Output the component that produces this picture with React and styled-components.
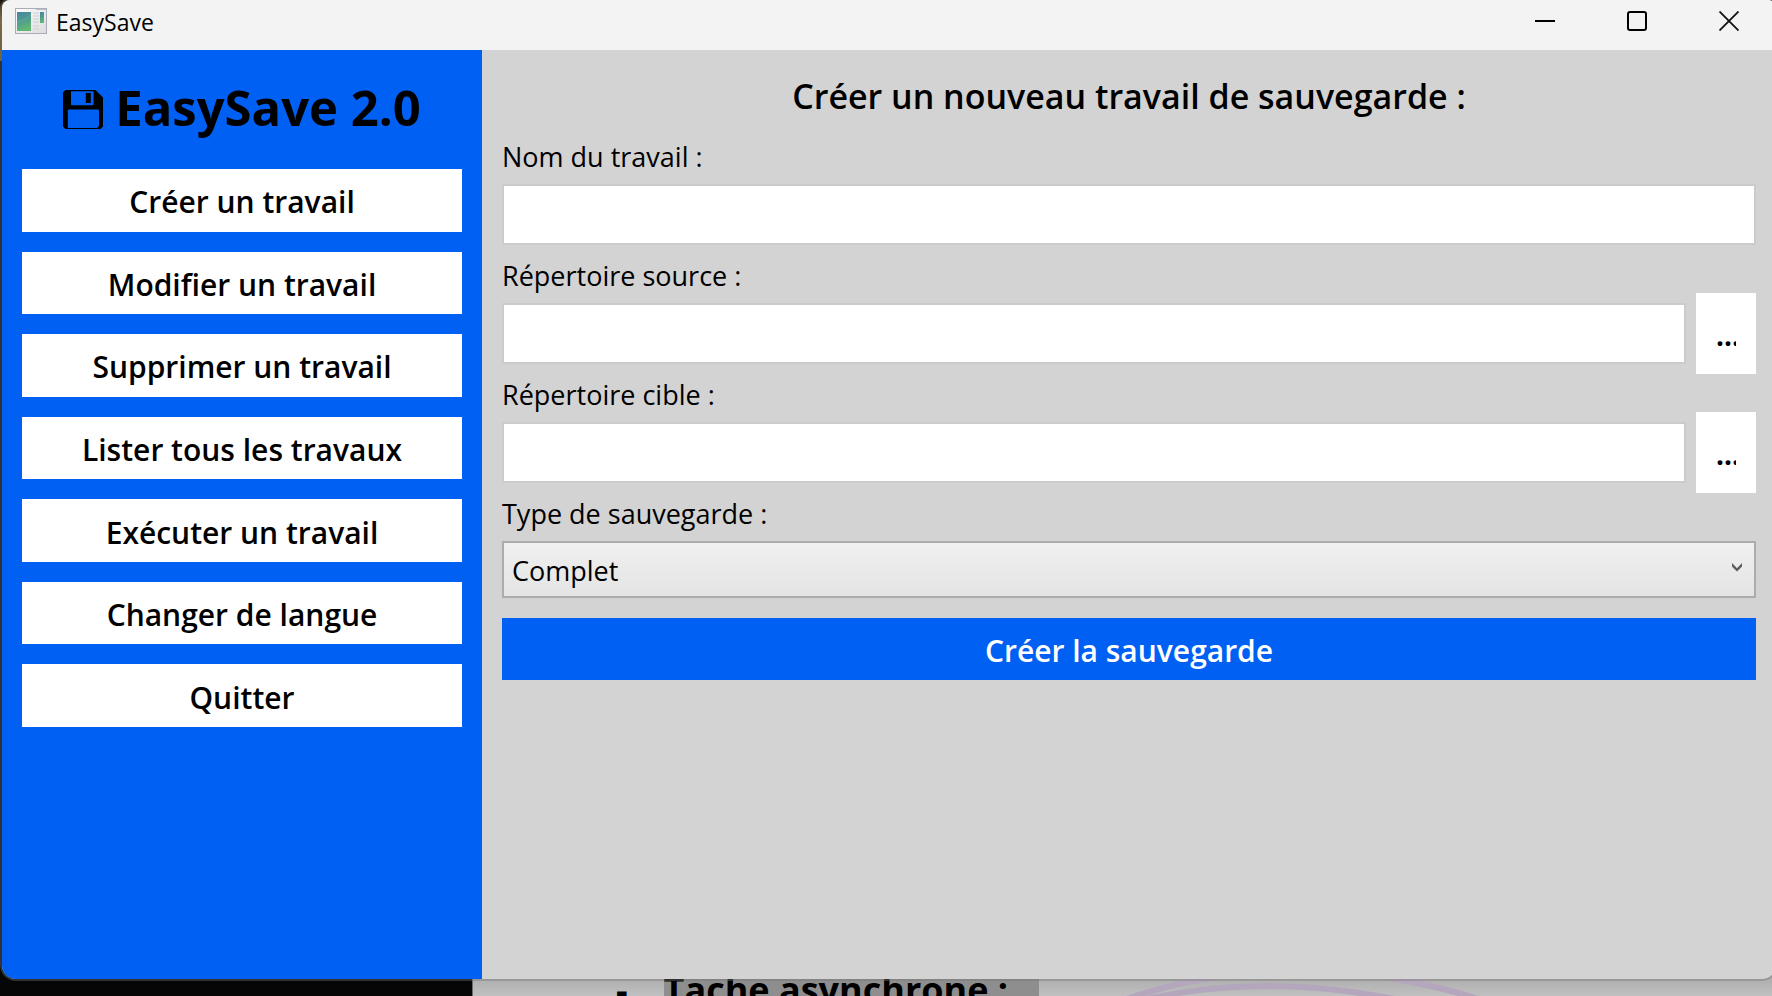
import React, { useId, useState } from 'react';
import styled, { createGlobalStyle } from 'styled-components';

const BLUE = '#0060f3';

const GlobalStyle = createGlobalStyle`
  *, *::before, *::after { box-sizing: border-box; }
  body {
    margin: 0;
    overflow: hidden;
    background: #060606;
    color: #000;
    font-family: "Segoe UI", "Open Sans", "Noto Sans", sans-serif;
  }
  button, input, select { font: inherit; color: inherit; border-radius: 0; }
`;

const Desktop = styled.div`
  position: relative;
  display: flex;
  min-height: 100vh;
  overflow: hidden;
`;

/* What shows behind the window: a wallpaper edge and an open document. */
const Wallpaper = styled.div`
  position: absolute;
  top: 0;
  left: 0;
  width: 12px;
  height: 61px;
  background: linear-gradient(#16120a, #7d6420 20px, #6a5518);
`;

const DocumentBehind = styled.div`
  position: absolute;
  inset: 50% 0 0 472px;
  overflow: hidden;
  border-left: 1px solid #6c6c6c;
  background: linear-gradient(to top, #c0c0c0, #b0b0b0 16px);
`;

const DocumentLine = styled.p`
  position: absolute;
  left: 143px;
  bottom: -18px;
  display: flex;
  gap: 36px;
  margin: 0;
  font-size: 36px;
  font-weight: 700;
  line-height: 48px;
`;

const Highlight = styled.mark`
  width: 375px;
  color: inherit;
  background: #8e8e8e;
`;

const Doodle = styled.svg`
  position: absolute;
  left: 627px;
  bottom: 0;
`;

const Window = styled.div`
  position: relative;
  flex: 1;
  display: flex;
  flex-direction: column;
  margin: -2px -6px 15px 0;
  border: 2px solid rgba(118, 118, 118, 0.4);
  border-radius: 10px 10px 16px 16px;
  background: #d3d3d3;
  background-clip: padding-box;
  overflow: hidden;
`;

const TitleBar = styled.header`
  display: flex;
  align-items: center;
  height: 50px;
  padding: 0 1px 8px 13px;
  background: #f3f3f3;
`;

const WindowTitle = styled.span`
  flex: 1;
  padding: 2px 0 0 9px;
  font-size: 23px;
  line-height: 40px;
`;

const WindowButton = styled.button`
  display: grid;
  place-items: center;
  width: 92px;
  height: 42px;
  padding: 0;
  border: 0;
  background: none;
`;

const Body = styled.div`
  flex: 1;
  display: flex;
`;

const Sidebar = styled.aside`
  flex: 0 0 480px;
  padding: 20px;
  background: ${BLUE};
`;

const Brand = styled.h1`
  display: flex;
  align-items: center;
  justify-content: center;
  gap: 12px;
  margin: 0 0 25px;
  font-size: 49px;
  font-weight: 700;
  line-height: 74px;
`;

const BrandIcon = styled.svg`
  margin-top: 4px;
`;

const Nav = styled.nav`
  display: grid;
  grid-auto-rows: 1fr;
  gap: 20px;
  min-height: 558px;
`;

const ActionButton = styled.button`
  width: 100%;
  min-height: 62px;
  padding: 4px 20px 0;
  border: 0;
  font-size: 30px;
  font-weight: 600;
  line-height: 40px;
  color: ${(p) => (p.$primary ? '#fff' : '#000')};
  background: ${(p) => (p.$primary ? BLUE : '#fff')};
`;

const Main = styled.main`
  flex: 1;
  min-width: 0;
  padding: 20px;
`;

const FormTitle = styled.h2`
  margin: 0 0 14px;
  font-size: 34px;
  font-weight: 600;
  line-height: 52px;
  text-align: center;
`;

const Label = styled.label`
  display: block;
  padding-top: 3px;
  font-size: 27px;
  line-height: 35px;
`;

const FieldRow = styled.div`
  display: flex;
  align-items: center;
  gap: 10px;
  min-height: 81px;
`;

const TextInput = styled.input`
  flex: 1;
  min-width: 0;
  height: 61px;
  padding: 0 8px;
  border: 2px solid #cbcbcb;
  background: #fff;
  font-size: 27px;
`;

const BrowseButton = styled.button`
  flex: none;
  width: 60px;
  height: 81px;
  padding: 2px 20px 0;
  border: 0;
  background: #fff;
  font-size: 28px;
  font-weight: 700;
  line-height: 40px;
`;

const Clipped = styled.span`
  display: block;
  overflow: hidden;
  text-align: left;
  white-space: nowrap;
`;

const SelectBox = styled.div`
  position: relative;
  margin: 10px 0 20px;
`;

const Select = styled.select`
  display: block;
  appearance: none;
  width: 100%;
  height: 57px;
  padding: 2px 50px 0 8px;
  border: 2px solid #acacac;
  background: linear-gradient(#f0f0f0, #e4e4e4);
  font-size: 27px;
`;

const Chevron = styled.svg`
  position: absolute;
  top: 22px;
  right: 14px;
  pointer-events: none;
`;

function AppIcon() {
  return (
    <svg width="32" height="26" viewBox="0 0 32 26" aria-hidden="true">
      <defs>
        <linearGradient id="pane" x1="0" y1="0" x2="0.3" y2="1">
          <stop offset="0" stopColor="#4b83a6" />
          <stop offset="0.5" stopColor="#4d9a8e" />
          <stop offset="1" stopColor="#63b873" />
        </linearGradient>
        <linearGradient id="frame" x1="0" y1="0" x2="1" y2="1">
          <stop offset="0" stopColor="#fdfdfd" />
          <stop offset="1" stopColor="#dcdcdf" />
        </linearGradient>
      </defs>
      <rect x="0.5" y="0.5" width="31" height="25" fill="url(#frame)" stroke="#a9adb8" />
      <path d="M21 1.5h10" stroke="#b9bdc8" />
      <rect x="2" y="4" width="14" height="19" fill="url(#pane)" />
      <path d="M2 14c5-1 9-3 14-7" fill="none" stroke="#7fb6b4" strokeOpacity="0.5" />
      <path d="M18 5h6M18 8h6M18 11h6M18 14h6M18 18h6M18 21h6" stroke="#cfcfd2" />
      <rect x="25" y="4" width="4" height="11" fill="url(#pane)" />
    </svg>
  );
}

function FloppyIcon() {
  return (
    <BrandIcon width="40" height="39" viewBox="0 0 40 39" aria-hidden="true">
      <path
        fillRule="evenodd"
        d="M2.5 0H32.5L40 7.5V36.5L37.5 39H2.5L0 36.5V2.5ZM8 1.2V14.2Q8 15.2 9 15.2H29.5Q30.6 15.2 30.6 14.2V2.2Q30.6 1.2 29.5 1.2ZM22.8 3H27.8V13H22.8ZM6 19.4Q4.8 19.4 4.8 20.4V38H34L36 36V20.4Q36 19.4 34.8 19.4Z"
      />
    </BrandIcon>
  );
}

const NAV_ITEMS = [
  'Créer un travail',
  'Modifier un travail',
  'Supprimer un travail',
  'Lister tous les travaux',
  'Exécuter un travail',
  'Changer de langue',
  'Quitter',
];

function TextField({ label, browse }) {
  const id = useId();
  return (
    <>
      <Label htmlFor={id}>{label}</Label>
      <FieldRow>
        <TextInput id={id} type="text" />
        {browse && (
          <BrowseButton type="button" aria-label={`Parcourir, ${label}`}>
            <Clipped>...</Clipped>
          </BrowseButton>
        )}
      </FieldRow>
    </>
  );
}

export default function App() {
  const [type, setType] = useState('Complet');
  return (
    <>
      <GlobalStyle />
      <Desktop>
        <Wallpaper />
        <DocumentBehind>
          <DocumentLine>
            <span>-</span>
            <Highlight>Tache asynchrone :</Highlight>
          </DocumentLine>
          <Doodle width="420" height="20" viewBox="0 0 420 20" aria-hidden="true">
            <g fill="none" stroke="#b4a6bc" strokeWidth="6">
              <path d="M24 24Q70 8 110 2Q200 -20 290 2Q335 9 385 25" />
              <path d="M46 23Q165 -3 295 23" />
            </g>
          </Doodle>
        </DocumentBehind>
        <Window>
          <TitleBar>
            <AppIcon />
            <WindowTitle>EasySave</WindowTitle>
            <WindowButton type="button" aria-label="Réduire">
              <svg width="20" height="20" viewBox="0 0 20 20">
                <path d="M0 10H20" stroke="#000" strokeWidth="2" />
              </svg>
            </WindowButton>
            <WindowButton type="button" aria-label="Agrandir">
              <svg width="20" height="20" viewBox="0 0 20 20">
                <rect x="1" y="1" width="18" height="18" rx="2" fill="none" stroke="#000" strokeWidth="2" />
              </svg>
            </WindowButton>
            <WindowButton type="button" aria-label="Fermer">
              <svg width="20" height="20" viewBox="0 0 20 20">
                <path d="M0.5 0.5L19.5 19.5M19.5 0.5L0.5 19.5" stroke="#111" strokeWidth="1.8" />
              </svg>
            </WindowButton>
          </TitleBar>
          <Body>
            <Sidebar>
              <Brand>
                <FloppyIcon />
                EasySave 2.0
              </Brand>
              <Nav>
                {NAV_ITEMS.map((item) => (
                  <ActionButton key={item} type="button">
                    {item}
                  </ActionButton>
                ))}
              </Nav>
            </Sidebar>
            <Main>
              <form onSubmit={(e) => e.preventDefault()}>
                <FormTitle>Créer un nouveau travail de sauvegarde :</FormTitle>
                <TextField label="Nom du travail :" />
                <TextField label="Répertoire source :" browse />
                <TextField label="Répertoire cible :" browse />
                <Label htmlFor="type">Type de sauvegarde :</Label>
                <SelectBox>
                  <Select id="type" value={type} onChange={(e) => setType(e.target.value)}>
                    <option>Complet</option>
                  </Select>
                  <Chevron width="10" height="9" viewBox="0 0 10 9" aria-hidden="true">
                    <path d="M0 0L5 5.2L10 0V3.4L5 8.6L0 3.4Z" fill="#5c5c5c" />
                  </Chevron>
                </SelectBox>
                <ActionButton type="submit" $primary>
                  Créer la sauvegarde
                </ActionButton>
              </form>
            </Main>
          </Body>
        </Window>
      </Desktop>
    </>
  );
}
